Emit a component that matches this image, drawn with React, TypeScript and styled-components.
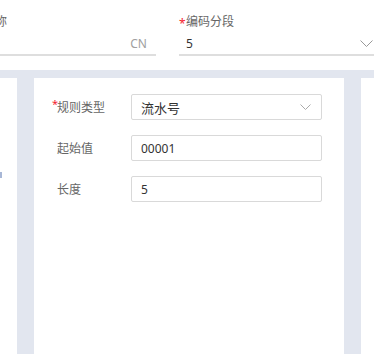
import React from "react";
import styled, { createGlobalStyle } from "styled-components";

const Global = createGlobalStyle`
  html, body { margin: 0; padding: 0; }
  body {
    width: 374px;
    height: 354px;
    overflow: hidden;
    background: #ffffff;
    font-family: "Noto Sans", "Noto Sans CJK SC", sans-serif;
    font-size: 12px;
  }
  #root { width: 374px; height: 354px; overflow: hidden; }
`;

const Page = styled.div`
  display: flex;
  flex-direction: column;
  width: 374px;
  height: 354px;
  overflow: hidden;
`;

const Header = styled.div`
  height: 70px;
  flex: none;
  background: #fff;
  display: flex;
  gap: 23px;
  margin-left: -17px;
  padding-top: 12px;
  box-sizing: border-box;
`;

const TopField = styled.div<{ $w: number }>`
  width: ${(p) => p.$w}px;
  flex: none;
  display: flex;
  flex-direction: column;
`;

const TopLabel = styled.div`
  display: flex;
  align-items: center;
  height: 20px;
  line-height: 20px;
  color: #666;
  font-size: 12px;
`;

const Star = styled.span`
  color: #f5222d;
  width: 7px;
  font-size: 12px;
  line-height: 1;
  margin-top: 2px;
  align-self: flex-start;
  padding-top: 4px;
`;

const TopValue = styled.div<{ $align?: string; $pr: number }>`
  height: 21px;
  margin-top: 1px;
  border-bottom: 2px solid #dedede;
  display: flex;
  align-items: center;
  justify-content: ${(p) => p.$align || "space-between"};
  padding-right: ${(p) => p.$pr}px;
  color: #333;
  font-size: 12px;
`;

const Placeholder = styled.span`
  color: #a0a0a0;
`;

const TopValueText = styled.span`
  padding-left: 7px;
`;

const Chevron = ({ w, h, color }: { w: number; h: number; color: string }) => (
  <svg width={w} height={h} viewBox={`0 0 ${w} ${h}`} fill="none">
    <polyline
      points={`0.5,0.5 ${w / 2},${h - 0.5} ${w - 0.5},0.5`}
      stroke={color}
      strokeWidth="1"
    />
  </svg>
);

const Body = styled.div`
  flex: 1;
  background: #e2e6ef;
  padding-top: 8px;
  display: flex;
  gap: 17px;
  min-height: 0;
`;

const Card = styled.div<{ $w?: number }>`
  background: #fff;
  ${(p) => (p.$w ? `width: ${p.$w}px; flex: none;` : "flex: 1;")}
  box-sizing: border-box;
`;

const LeftCard = styled(Card)`
  padding-top: 94px;
`;

const Mark = styled.div`
  width: 2px;
  height: 6px;
  background: #a8b7d6;
`;

const Form = styled.div`
  padding: 16px 22px 0 18px;
  display: flex;
  flex-direction: column;
  gap: 15px;
`;

const Row = styled.div`
  display: flex;
  align-items: center;
`;

const Label = styled.div`
  width: 79px;
  flex: none;
  display: flex;
  align-items: center;
  color: #666;
  font-size: 12px;
  padding-left: 5px;
  box-sizing: border-box;
  position: relative;
`;

const FormStar = styled.span`
  position: absolute;
  left: 0;
  top: -2px;
  color: #f5222d;
  font-size: 11px;
`;

const Input = styled.div`
  flex: 1;
  height: 26px;
  box-sizing: border-box;
  border: 1px solid #d9d9d9;
  border-radius: 2px;
  display: flex;
  align-items: center;
  justify-content: space-between;
  padding: 0 10px 0 9px;
  color: #333;
  font-size: 12px;
`;

const SelectText = styled.span`
  font-size: 13px;
`;

export default function App() {
  return (
    <>
      <Global />
      <Page>
        <Header>
          <TopField $w={173}>
            <TopLabel>名称</TopLabel>
            <TopValue $align="flex-end" $pr={9}>
              <Placeholder>CN</Placeholder>
            </TopValue>
          </TopField>
          <TopField $w={200}>
            <TopLabel>
              <Star>*</Star>编码分段
            </TopLabel>
            <TopValue $pr={6}>
              <TopValueText>5</TopValueText>
              <Chevron w={13} h={7} color="#999" />
            </TopValue>
          </TopField>
        </Header>
        <Body>
          <LeftCard $w={17}>
            <Mark />
          </LeftCard>
          <Card $w={310}>
            <Form>
              <Row>
                <Label>
                  <FormStar>*</FormStar>规则类型
                </Label>
                <Input>
                  <SelectText>流水号</SelectText>
                  <Chevron w={11} h={6} color="#aaa" />
                </Input>
              </Row>
              <Row>
                <Label>起始值</Label>
                <Input>00001</Input>
              </Row>
              <Row>
                <Label>长度</Label>
                <Input>5</Input>
              </Row>
            </Form>
          </Card>
          <Card />
        </Body>
      </Page>
    </>
  );
}
